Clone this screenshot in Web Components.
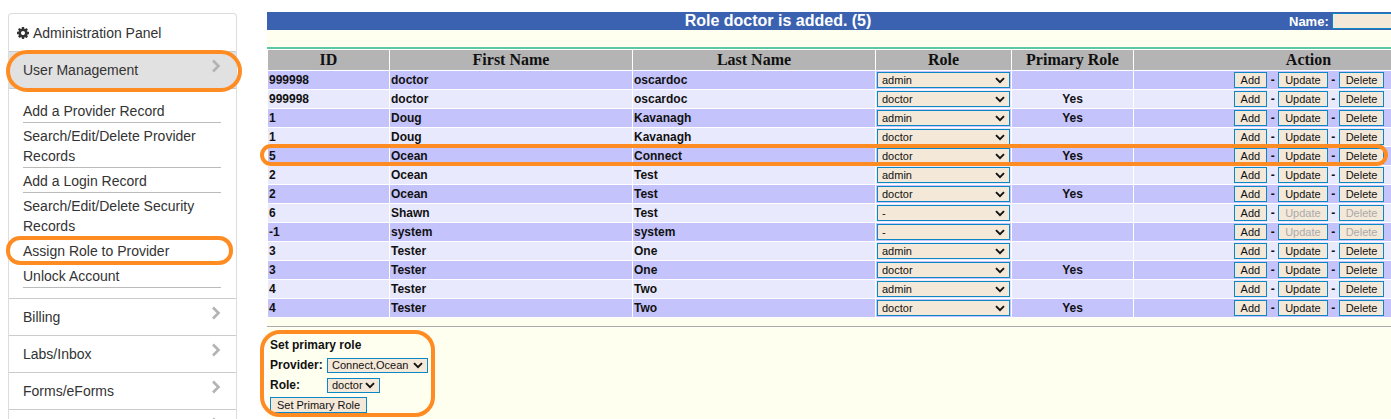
<!DOCTYPE html>
<html>
<head>
<meta charset="utf-8">
<title>Assign Role to Provider</title>
<style>
    html, body { margin: 0; height: 100%; overflow: hidden; background: #fff; }
    body { display: flex; align-items: flex-start; position: relative; font-family: "Liberation Sans", Arial, sans-serif; }
</style>
</head>
<body>
<admin-sidebar>
    <side-section label="User Management" active>
        <side-link>Add a Provider Record</side-link>
        <side-link>Search/Edit/Delete Provider Records</side-link>
        <side-link>Add a Login Record</side-link>
        <side-link>Search/Edit/Delete Security Records</side-link>
        <side-link>Assign Role to Provider</side-link>
        <side-link>Unlock Account</side-link>
    </side-section>
    <side-section label="Billing"></side-section>
    <side-section label="Labs/Inbox"></side-section>
    <side-section label="Forms/eForms"></side-section>
    <side-section></side-section>
</admin-sidebar>

<role-panel>
    <role-table></role-table>
    <primary-role-form></primary-role-form>
</role-panel>

<mark-ring style="left:6px;top:50px;width:236px;height:42px;border-radius:21px"></mark-ring>
<mark-ring style="left:6px;top:236px;width:227px;height:29px;border-radius:14px"></mark-ring>
<mark-ring style="left:260px;top:144px;width:1128px;height:22px;border-radius:11px"></mark-ring>
<mark-ring style="left:260px;top:330px;width:175px;height:87px;border-radius:20px"></mark-ring>

<script>
const CHEVRON = `<svg width="10" height="14" viewBox="0 0 10 14" aria-hidden="true"><path d="M2 1.5 7.5 7 2 12.5" fill="none" stroke="#b3b3b3" stroke-width="2.6"/></svg>`;
const SELECT_ARROW = "url(\"data:image/svg+xml,%3Csvg xmlns='http://www.w3.org/2000/svg' width='10' height='7'%3E%3Cpath d='M1 1.2 5 5.2 9 1.2' fill='none' stroke='%23111' stroke-width='1.9'/%3E%3C/svg%3E\")";
const FIELD_STYLES = `
    select {
        appearance: none;
        -webkit-appearance: none;
        display: block;
        height: 16px;
        margin: 0;
        padding: 0 0 0 4px;
        box-sizing: border-box;
        border: 1px solid #0a87c4;
        border-radius: 0;
        background-color: #f4e8d8;
        background-image: ${SELECT_ARROW};
        background-repeat: no-repeat;
        background-position: right 4px center;
        color: #111;
        font: 11px "Liberation Sans", Arial, sans-serif;
    }
    button {
        height: 16px;
        margin: 0;
        padding: 0 6px;
        box-sizing: border-box;
        border: 1px solid #0a87c4;
        border-radius: 0;
        background: #f4e8d8;
        color: #111;
        font: 11px "Liberation Sans", Arial, sans-serif;
    }
    button[disabled] { color: #aaa; }
`;

class AdminSidebar extends HTMLElement {
    constructor() {
        super();
        this.attachShadow({ mode: 'open' });
        this.shadowRoot.innerHTML = `
            <style>
                :host {
                    display: block;
                    flex: none;
                    width: 229px;
                    margin: 13px 0 0 8px;
                    box-sizing: border-box;
                    border: 1px solid #ddd;
                    border-bottom: none;
                    border-radius: 4px 4px 0 0;
                    color: #333;
                    font: 14px/20px "Liberation Sans", Arial, sans-serif;
                }
                .title {
                    display: flex;
                    align-items: center;
                    gap: 4px;
                    height: 37px;
                    padding-left: 8px;
                    box-sizing: border-box;
                }
                svg { display: block; }
            </style>
            <div class="title">
                <svg width="12" height="12" viewBox="0 0 1536 1536" fill="#333" aria-hidden="true"><path d="M1024 768q0-106-75-181t-181-75-181 75-75 181 75 181 181 75 181-75 75-181zm512-109v222q0 12-8 23t-20 13l-185 28q-19 54-39 91 35 50 107 138 10 12 10 25t-9 23q-27 37-99 108t-94 71q-12 0-26-9l-138-108q-44 23-91 38-16 136-29 186-7 28-36 28h-222q-14 0-24.5-8.5t-11.5-21.5l-28-184q-49-16-90-37l-141 107q-10 9-25 9-14 0-25-11-126-114-165-168-7-10-7-23 0-12 8-23 15-21 51-66.5t54-70.5q-27-50-41-99l-183-27q-13-2-21-12.5t-8-23.5v-222q0-12 8-23t19-13l186-28q14-46 39-92-40-57-107-138-10-12-10-24 0-10 9-23 26-36 98.5-107.5t94.5-71.5q13 0 26 10l138 107q44-23 91-38 16-136 29-186 7-28 36-28h222q14 0 24.5 8.5t11.5 21.5l28 184q49 16 90 37l142-107q9-9 24-9 13 0 25 10 129 119 165 170 7 8 7 22 0 12-8 23-15 21-51 66.5t-54 70.5q26 50 41 98l183 28q13 2 21 12.5t8 23.5z"/></svg>
                <span>Administration Panel</span>
            </div>
            <slot></slot>
        `;
    }
}

class SideSection extends HTMLElement {
    constructor() {
        super();
        this.attachShadow({ mode: 'open' });
    }

    connectedCallback() {
        const active = this.hasAttribute('active');
        this.shadowRoot.innerHTML = `
            <style>
                :host { display: block; }
                .head {
                    display: flex;
                    justify-content: space-between;
                    height: 37px;
                    padding: 8px 15px 0 14px;
                    box-sizing: border-box;
                    border-top: 1px solid #ccc;
                    background: ${active ? '#e1e1e1' : '#fff'};
                }
                .head svg { margin-top: -1px; }
                .list {
                    display: ${active ? 'block' : 'none'};
                    padding: 9px 15px 10px 14px;
                    border-top: 1px solid #ccc;
                }
            </style>
            <div class="head"><span>${this.getAttribute('label') || ''}</span>${CHEVRON}</div>
            <div class="list"><slot></slot></div>
        `;
    }
}

class SideLink extends HTMLElement {
    constructor() {
        super();
        this.attachShadow({ mode: 'open' });
        this.shadowRoot.innerHTML = `
            <style>
                :host {
                    display: block;
                    padding: 3px 0 1px;
                    border-bottom: 1px solid #bbb;
                }
            </style>
            <slot></slot>
        `;
    }
}

class RolePanel extends HTMLElement {
    constructor() {
        super();
        this.attachShadow({ mode: 'open' });
        this.shadowRoot.innerHTML = `
            <style>
                :host {
                    display: block;
                    flex: 1;
                    min-width: 0;
                    height: 407px;
                    margin: 12px 0 0 30px;
                    overflow: hidden;
                    background: #ffffef;
                }
                .inner { width: 1217px; }
                .bar {
                    display: flex;
                    align-items: center;
                    height: 18px;
                    background: #3b62b0;
                    color: #fff;
                    font-weight: bold;
                }
                .bar h1 {
                    flex: none;
                    width: 1022px;
                    margin: 0;
                    text-align: center;
                    font-size: 16px;
                }
                .bar label { font-size: 13px; margin-right: 3px; }
                .bar input {
                    flex: 1;
                    min-width: 0;
                    height: 16px;
                    margin: 0;
                    padding: 0;
                    box-sizing: border-box;
                    border: 1px solid #0a87c4;
                    background: #f4e8d8;
                }
                .spacer { height: 17px; }
            </style>
            <div class="inner">
                <div class="bar"><h1>Role doctor is added. (5)</h1><label>Name:</label><input type="text"></div>
                <div class="spacer"></div>
                <slot></slot>
            </div>
        `;
    }
}

const ROWS = [
    ['999998', 'doctor', 'oscardoc', 'admin', ''],
    ['999998', 'doctor', 'oscardoc', 'doctor', 'Yes'],
    ['1', 'Doug', 'Kavanagh', 'admin', 'Yes'],
    ['1', 'Doug', 'Kavanagh', 'doctor', ''],
    ['5', 'Ocean', 'Connect', 'doctor', 'Yes'],
    ['2', 'Ocean', 'Test', 'admin', ''],
    ['2', 'Ocean', 'Test', 'doctor', 'Yes'],
    ['6', 'Shawn', 'Test', '-', ''],
    ['-1', 'system', 'system', '-', ''],
    ['3', 'Tester', 'One', 'admin', ''],
    ['3', 'Tester', 'One', 'doctor', 'Yes'],
    ['4', 'Tester', 'Two', 'admin', ''],
    ['4', 'Tester', 'Two', 'doctor', 'Yes']
];

class RoleTable extends HTMLElement {
    constructor() {
        super();
        this.attachShadow({ mode: 'open' });
        this.render();
    }

    render() {
        const body = ROWS.map(r => {
            const off = r[3] === '-' ? ' disabled' : '';
            return `<tr>
                <td>${r[0]}</td><td>${r[1]}</td><td>${r[2]}</td>
                <td class="role"><select><option>${r[3]}</option></select></td>
                <td class="mid">${r[4]}</td>
                <td class="act"><div class="btns"><button>Add</button><b>-</b><button${off}>Update</button><b>-</b><button${off}>Delete</button></div></td>
            </tr>`;
        }).join('');
        this.shadowRoot.innerHTML = `
            <style>
                :host {
                    display: block;
                    border-top: 2px solid #5cc8a2;
                }
                ${FIELD_STYLES}
                table {
                    table-layout: fixed;
                    width: 1217px;
                    border-collapse: separate;
                    border-spacing: 1px;
                    background: #fff;
                    color: #111;
                    font: bold 12px "Liberation Sans", Arial, sans-serif;
                }
                th {
                    height: 20px;
                    padding: 0;
                    background: #b4b4b4;
                    font: bold 16px "Liberation Serif", "Times New Roman", serif;
                }
                td {
                    height: 18px;
                    padding: 0 0 0 1px;
                    box-sizing: border-box;
                    overflow: hidden;
                    white-space: nowrap;
                }
                tbody tr:nth-child(odd) td { background: #c4c3fc; }
                tbody tr:nth-child(even) td { background: #e9e9fd; }
                td.mid { text-align: center; padding: 0; }
                td.role select { width: 133px; }
                .btns {
                    display: flex;
                    justify-content: center;
                    align-items: center;
                }
                .btns b { width: 11px; text-align: center; }
            </style>
            <table>
                <colgroup>
                    <col style="width:121px"><col style="width:242px"><col style="width:242px">
                    <col style="width:135px"><col style="width:121px"><col>
                </colgroup>
                <thead><tr><th>ID</th><th>First Name</th><th>Last Name</th><th>Role</th><th>Primary Role</th><th>Action</th></tr></thead>
                <tbody>${body}</tbody>
            </table>
        `;
    }
}

class PrimaryRoleForm extends HTMLElement {
    constructor() {
        super();
        this.attachShadow({ mode: 'open' });
        this.shadowRoot.innerHTML = `
            <style>
                :host {
                    display: block;
                    padding: 8px 0 0 3px;
                    color: #111;
                    font: bold 12px "Liberation Sans", Arial, sans-serif;
                }
                ${FIELD_STYLES}
                hr {
                    height: 1px;
                    margin: 0 0 11px -3px;
                    border: none;
                    background: #aaa;
                }
                .grid {
                    display: grid;
                    grid-template-columns: 57px max-content;
                    row-gap: 5px;
                    align-items: center;
                    justify-items: start;
                }
                .head { grid-column: 1 / 3; height: 15px; }
                label { margin-top: -2px; }
                select { height: 15px; padding-bottom: 2px; }
                .provider { width: 101px; }
                .role { width: 53px; }
                .grid button { grid-column: 1 / 3; width: 97px; height: 16px; padding: 0; margin-top: -1px; }
            </style>
            <hr>
            <div class="grid">
                <div class="head">Set primary role</div>
                <label>Provider:</label><select class="provider"><option>Connect,Ocean</option></select>
                <label>Role:</label><select class="role"><option>doctor</option></select>
                <button>Set Primary Role</button>
            </div>
        `;
    }
}

class MarkRing extends HTMLElement {
    constructor() {
        super();
        this.attachShadow({ mode: 'open' });
        this.shadowRoot.innerHTML = `
            <style>
                :host {
                    display: block;
                    position: absolute;
                    box-sizing: border-box;
                    border: 4px solid #ff8c22;
                    pointer-events: none;
                }
            </style>
        `;
    }
}

customElements.define('admin-sidebar', AdminSidebar);
customElements.define('side-section', SideSection);
customElements.define('side-link', SideLink);
customElements.define('role-panel', RolePanel);
customElements.define('role-table', RoleTable);
customElements.define('primary-role-form', PrimaryRoleForm);
customElements.define('mark-ring', MarkRing);
</script>
</body>
</html>
